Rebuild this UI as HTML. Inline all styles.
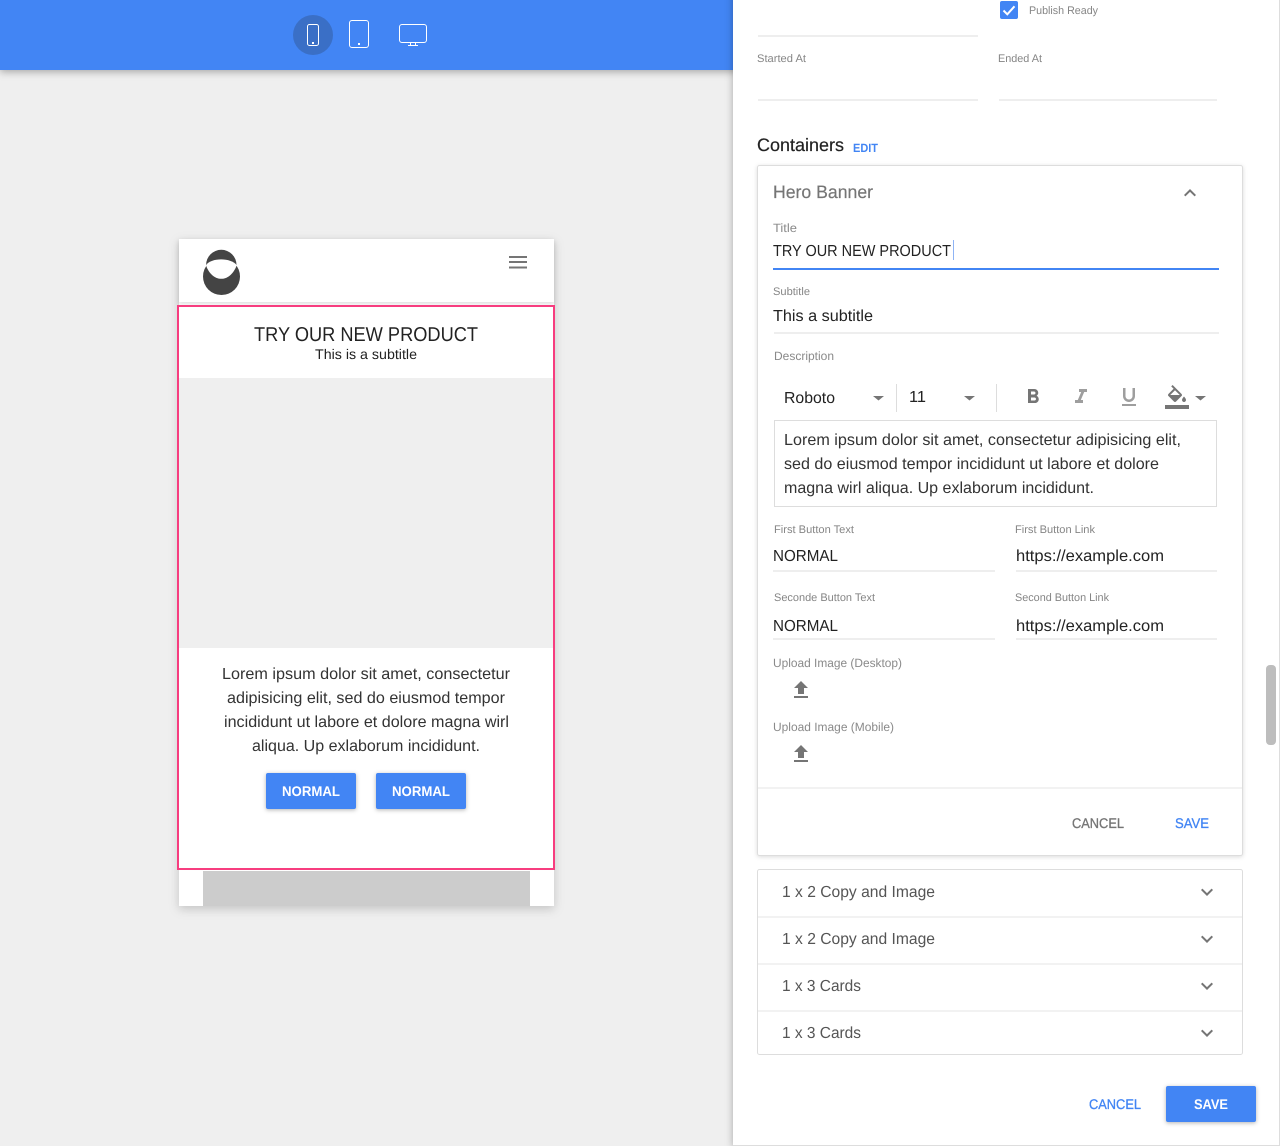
<!DOCTYPE html>
<html lang="en"><head><meta charset="utf-8"><title>Editor</title>
<style>
html,body{margin:0;padding:0;background:#efefef;width:1280px;height:1146px;overflow:hidden}
svg{display:block}
text{font-family:"Liberation Sans",Arial,sans-serif;text-rendering:geometricPrecision}
.lb{font-size:12px;fill:#8a8a8a}
.ls{font-size:11px;fill:#858585}
.v{font-size:16px;fill:#333}
.d{font-size:16px;fill:#222}
.m{font-size:16px;fill:#555}
.b{font-size:14px;font-weight:700}
.md{font-weight:400;stroke-width:.3px}
.w{fill:#fff}
.bl{fill:#4285f4}
.g{fill:#757575}
.sh{filter:drop-shadow(0 1px 2px rgba(0,0,0,.3))}
.sh2{filter:drop-shadow(0 2px 4px rgba(0,0,0,.3))}
.sh3{filter:drop-shadow(0 3px 5px rgba(0,0,0,.18))}
.sh4{filter:drop-shadow(0 2px 2px rgba(0,0,0,.13))}
.sh5{filter:drop-shadow(0 1px 2px rgba(0,0,0,.14))}
</style></head>
<body>
<svg xmlns="http://www.w3.org/2000/svg" width="1280" height="1146" viewBox="0 0 1280 1146">
<rect width="1280" height="1146" fill="#efefef"/>

<!-- top bar -->
<rect class="sh2" x="0" y="0" width="740" height="70" fill="#4285f4"/>
<circle cx="313" cy="35" r="20" fill="#3a6fc6"/>
<g fill="none" stroke="#fff" stroke-width="1">
<rect x="307.5" y="24.5" width="11" height="21" rx="2"/>
<rect x="349.5" y="20.5" width="19" height="27" rx="2.5"/>
<rect x="399.5" y="24.5" width="27" height="18" rx="2.5"/>
<path d="M410.5 43v2.5M415.5 43v2.5M408 45.5h10"/>
</g>
<rect x="312" y="42" width="2" height="2" fill="#fff"/>
<rect x="358" y="43" width="2" height="2" fill="#fff"/>

<!-- phone preview -->
<rect class="sh3" x="179" y="239" width="375" height="667" fill="#fff"/>
<rect class="sh4" x="179" y="239" width="375" height="63" fill="#fff"/>
<circle cx="221.5" cy="276.5" r="18.5" fill="#444"/>
<circle cx="221.3" cy="265" r="15.2" fill="#444"/>
<path d="M206 265.200C211 257.500 231 257.500 236.700 265.200C234 273 228 278.800 221.300 278.800C214.500 278.800 208.500 273 206 265.200Z" fill="#fff"/>
<g fill="#757575"><rect x="509" y="256" width="18" height="2"/><rect x="509" y="261" width="18" height="2"/><rect x="509" y="266.500" width="18" height="2"/></g>
<rect x="203" y="871" width="327" height="35" fill="#ccc"/>
<rect x="178" y="306" width="376" height="563" fill="#fff" stroke="#f73d7f" stroke-width="2"/>
<rect x="179" y="378" width="374" height="270" fill="#efefef"/>
<text x="254" y="341" font-size="20" fill="#222" textLength="224" lengthAdjust="spacingAndGlyphs">TRY OUR NEW PRODUCT</text>
<text x="315" y="359" font-size="14" fill="#222" textLength="102" lengthAdjust="spacingAndGlyphs">This is a subtitle</text>
<text x="222" y="679" class="v" textLength="288" lengthAdjust="spacingAndGlyphs">Lorem ipsum dolor sit amet, consectetur</text>
<text x="227" y="703" class="v" textLength="278" lengthAdjust="spacingAndGlyphs">adipisicing elit, sed do eiusmod tempor</text>
<text x="224" y="727" class="v" textLength="285" lengthAdjust="spacingAndGlyphs">incididunt ut labore et dolore magna wirl</text>
<text x="252" y="751" class="v" textLength="228" lengthAdjust="spacingAndGlyphs">aliqua. Up exlaborum incididunt.</text>
<rect class="sh" x="266" y="773" width="90" height="36" rx="2" fill="#4285f4"/>
<rect class="sh" x="376" y="773" width="90" height="36" rx="2" fill="#4285f4"/>
<text x="282" y="796" class="b w" textLength="58" lengthAdjust="spacingAndGlyphs">NORMAL</text>
<text x="392" y="796" class="b w" textLength="58" lengthAdjust="spacingAndGlyphs">NORMAL</text>

<!-- right panel -->
<rect class="sh2" x="733" y="-10" width="546" height="1155" fill="#fff"/>
<rect x="1279" y="0" width="1" height="1146" fill="#ddd"/>
<rect x="733" y="1145" width="547" height="1" fill="#ddd"/>
<rect x="1266" y="665" width="10" height="80" rx="4" fill="#bdbdbd"/>

<rect x="1000" y="1" width="18" height="18" rx="2" fill="#4285f4"/>
<path d="M1003.500 10.500l3.800 3.800 7.200-8" fill="none" stroke="#fff" stroke-width="2"/>
<text x="1029" y="14" class="ls" textLength="69" lengthAdjust="spacingAndGlyphs">Publish Ready</text>
<rect x="758" y="35" width="220" height="2" fill="#eee"/>
<text x="757" y="62" class="ls" textLength="49" lengthAdjust="spacingAndGlyphs">Started At</text>
<text x="998" y="62" class="ls" textLength="44" lengthAdjust="spacingAndGlyphs">Ended At</text>
<rect x="758" y="99" width="220" height="2" fill="#eee"/>
<rect x="999" y="99" width="218" height="2" fill="#eee"/>
<text x="757" y="151" font-size="18" fill="#222" stroke="#222" stroke-width=".2" textLength="87" lengthAdjust="spacingAndGlyphs">Containers</text>
<text x="853" y="152" font-size="12" font-weight="700" class="bl" textLength="25" lengthAdjust="spacingAndGlyphs">EDIT</text>

<!-- hero card -->
<rect class="sh5" x="757.500" y="165.500" width="485" height="690" rx="2" fill="#fff" stroke="#ddd"/>
<text x="773" y="198" font-size="18" class="g" stroke="#757575" stroke-width=".2" textLength="100" lengthAdjust="spacingAndGlyphs">Hero Banner</text>
<path transform="translate(1178 181)" d="M12 8l-6 6 1.410 1.410L12 10.830l4.590 4.580L18 14z" fill="#757575"/>
<text x="773" y="232" class="lb" textLength="24" lengthAdjust="spacingAndGlyphs">Title</text>
<text x="773" y="256" class="d" textLength="178" lengthAdjust="spacingAndGlyphs">TRY OUR NEW PRODUCT</text>
<rect x="953" y="240" width="1" height="20" fill="#8fb4f5"/>
<rect x="773" y="268" width="446" height="2" fill="#4285f4"/>
<text x="773" y="295" class="ls" textLength="37" lengthAdjust="spacingAndGlyphs">Subtitle</text>
<text x="773" y="321" class="d" textLength="100" lengthAdjust="spacingAndGlyphs">This a subtitle</text>
<rect x="774" y="332" width="445" height="2" fill="#eee"/>
<text x="774" y="360" class="lb" textLength="60" lengthAdjust="spacingAndGlyphs">Description</text>

<!-- toolbar -->
<text x="784" y="403" class="d" textLength="51" lengthAdjust="spacingAndGlyphs">Roboto</text>
<path d="M873 396h11l-5.500 4.500z" fill="#757575"/>
<rect x="896" y="384" width="1" height="28" fill="#ddd"/>
<text x="909" y="402" class="d" textLength="17" lengthAdjust="spacingAndGlyphs">11</text>
<path d="M964 396h11l-5.500 4.500z" fill="#757575"/>
<rect x="996" y="384" width="1" height="28" fill="#ddd"/>
<path transform="translate(1021 385)" fill="#757575" d="M15.600 10.790c.97-.67 1.650-1.770 1.650-2.790 0-2.260-1.750-4-4-4H7v14h7.040c2.090 0 3.710-1.700 3.710-3.790 0-1.520-.86-2.820-2.150-3.420zM10 6.500h3c.83 0 1.500.67 1.500 1.500s-.67 1.500-1.500 1.500h-3v-3zm3.500 9H10v-3h3.500c.83 0 1.500.67 1.500 1.500s-.67 1.500-1.500 1.500z"/>
<path transform="translate(1069 385)" fill="#9e9e9e" d="M10 4v3h2.210l-3.420 8H6v3h8v-3h-2.210l3.420-8H18V4z"/>
<path transform="translate(1117 385)" fill="#9e9e9e" d="M12 17c3.310 0 6-2.690 6-6V3h-2.500v8c0 1.930-1.570 3.500-3.500 3.500S8.500 12.930 8.500 11V3H6v8c0 3.310 2.690 6 6 6zm-7 2v2h14v-2H5z"/>
<path transform="translate(1165 385)" fill="#757575" d="M16.560 8.940L7.620 0 6.210 1.410l2.380 2.380-5.150 5.150c-.59.59-.59 1.540 0 2.120l5.500 5.500c.29.29.68.44 1.060.44s.77-.15 1.060-.44l5.500-5.500c.59-.58.59-1.530 0-2.120zM5.210 10L10 5.210 14.790 10H5.210zM19 11.500s-2 2.170-2 3.500c0 1.100.9 2 2 2s2-.9 2-2c0-1.330-2-3.500-2-3.500zM0 20h24v4H0z"/>
<path d="M1195 396h11l-5.500 4.500z" fill="#757575"/>

<rect x="774.500" y="420.500" width="442" height="86" fill="#fff" stroke="#ddd"/>
<text x="784" y="445" class="v" textLength="397" lengthAdjust="spacingAndGlyphs">Lorem ipsum dolor sit amet, consectetur adipisicing elit,</text>
<text x="784" y="469" class="v" textLength="375" lengthAdjust="spacingAndGlyphs">sed do eiusmod tempor incididunt ut labore et dolore</text>
<text x="784" y="493" class="v" textLength="310" lengthAdjust="spacingAndGlyphs">magna wirl aliqua. Up exlaborum incididunt.</text>

<text x="774" y="533" class="ls" textLength="80" lengthAdjust="spacingAndGlyphs">First Button Text</text>
<text x="1015" y="533" class="ls" textLength="80" lengthAdjust="spacingAndGlyphs">First Button Link</text>
<text x="773" y="561" class="d" textLength="65" lengthAdjust="spacingAndGlyphs">NORMAL</text>
<text x="1016" y="561" class="d" textLength="148" lengthAdjust="spacingAndGlyphs">https://example.com</text>
<rect x="773" y="570" width="222" height="2" fill="#eee"/>
<rect x="1016" y="570" width="201" height="2" fill="#eee"/>
<text x="774" y="601" class="ls" textLength="101" lengthAdjust="spacingAndGlyphs">Seconde Button Text</text>
<text x="1015" y="601" class="ls" textLength="94" lengthAdjust="spacingAndGlyphs">Second Button Link</text>
<text x="773" y="631" class="d" textLength="65" lengthAdjust="spacingAndGlyphs">NORMAL</text>
<text x="1016" y="631" class="d" textLength="148" lengthAdjust="spacingAndGlyphs">https://example.com</text>
<rect x="773" y="638" width="222" height="2" fill="#eee"/>
<rect x="1016" y="638" width="201" height="2" fill="#eee"/>
<text x="773" y="667" class="lb" textLength="129" lengthAdjust="spacingAndGlyphs">Upload Image (Desktop)</text>
<path transform="translate(789 678)" fill="#757575" d="M9 16h6v-6h4l-7-7-7 7h4zm-4 2h14v2H5z"/>
<text x="773" y="731" class="lb" textLength="121" lengthAdjust="spacingAndGlyphs">Upload Image (Mobile)</text>
<path transform="translate(789 742)" fill="#757575" d="M9 16h6v-6h4l-7-7-7 7h4zm-4 2h14v2H5z"/>
<rect x="758" y="787" width="484" height="2" fill="#f2f2f2"/>
<text x="1072" y="828" class="b g md" stroke="#757575" textLength="52" lengthAdjust="spacingAndGlyphs">CANCEL</text>
<text x="1175" y="828" class="b bl md" stroke="#4285f4" textLength="34" lengthAdjust="spacingAndGlyphs">SAVE</text>

<!-- list card -->
<rect x="757.500" y="869.500" width="485" height="185" rx="2" fill="#fff" stroke="#ddd"/>
<rect x="758" y="916" width="484" height="2" fill="#f2f2f2"/>
<rect x="758" y="963" width="484" height="2" fill="#f2f2f2"/>
<rect x="758" y="1010" width="484" height="2" fill="#f2f2f2"/>
<text x="782" y="897" class="m" textLength="153" lengthAdjust="spacingAndGlyphs">1 x 2 Copy and Image</text>
<text x="782" y="944" class="m" textLength="153" lengthAdjust="spacingAndGlyphs">1 x 2 Copy and Image</text>
<text x="782" y="991" class="m" textLength="79" lengthAdjust="spacingAndGlyphs">1 x 3 Cards</text>
<text x="782" y="1038" class="m" textLength="79" lengthAdjust="spacingAndGlyphs">1 x 3 Cards</text>
<g fill="#757575">
<path transform="translate(1195 880)" d="M16.590 8.590L12 13.170 7.410 8.590 6 10l6 6 6-6z"/>
<path transform="translate(1195 927)" d="M16.590 8.590L12 13.170 7.410 8.590 6 10l6 6 6-6z"/>
<path transform="translate(1195 974)" d="M16.590 8.590L12 13.170 7.410 8.590 6 10l6 6 6-6z"/>
<path transform="translate(1195 1021)" d="M16.590 8.590L12 13.170 7.410 8.590 6 10l6 6 6-6z"/>
</g>

<!-- footer -->
<text x="1089" y="1109" class="b bl md" stroke="#4285f4" textLength="52" lengthAdjust="spacingAndGlyphs">CANCEL</text>
<rect class="sh" x="1166" y="1086" width="90" height="36" rx="2" fill="#4285f4"/>
<text x="1194" y="1109" class="b w" textLength="34" lengthAdjust="spacingAndGlyphs">SAVE</text>
</svg>
</body></html>
